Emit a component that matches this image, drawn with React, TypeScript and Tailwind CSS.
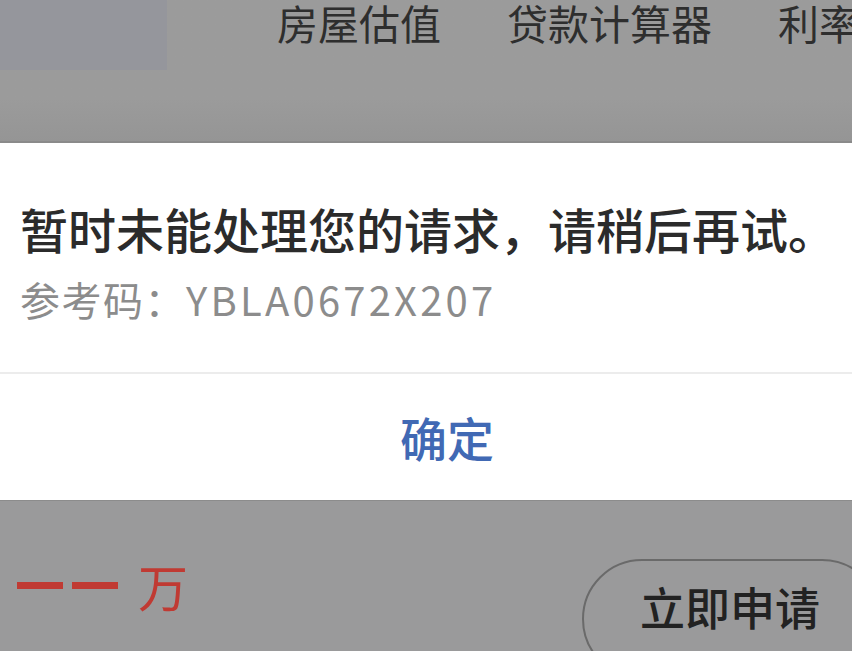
import React from "react";

export default function App() {
  return (
    <div
      className="w-[852px] h-[651px] overflow-hidden bg-[#9a9a9b] flex flex-col"
      style={{ fontFamily: '"Noto Sans CJK SC", "Noto Sans", sans-serif' }}
    >
      {/* top dimmed header */}
      <div className="h-[143px] flex items-start bg-gradient-to-b from-[#9b9b9b] from-70% to-[#959595] border-b-2 border-[#8a8a8a] shrink-0">
        <div className="w-[167px] h-[70px] bg-[#95969c] shrink-0" />
        <div className="ml-[110px] pt-[2px] flex gap-[66px] text-[41px] leading-[41px] text-[#2e2e2e] whitespace-nowrap">
          <span>房屋估值</span>
          <span>贷款计算器</span>
          <span>利率</span>
        </div>
      </div>

      {/* dialog */}
      <div className="bg-white h-[357px] shrink-0 flex flex-col">
        <div className="h-[231px] flex flex-col pl-[20px] pt-[57px] border-b-2 border-[#ececec]">
          <div className="text-[48px] leading-[56px] font-medium text-[#2b2b2b] whitespace-nowrap">
            暂时未能处理您的请求，请稍后再试。
          </div>
          <div className="mt-[20px] text-[40px] leading-[46px] tracking-[1.5px] text-[#8c8c8c] whitespace-nowrap">
            参考码：<span className="tracking-[3.2px]">YBLA0672X207</span>
          </div>
        </div>
        <div className="flex-1 flex items-center justify-center pl-[42px]">
          <span className="text-[47px] leading-[56px] font-medium text-[#4169b4]">确定</span>
        </div>
      </div>

      {/* bottom dimmed bar */}
      <div className="flex-1 relative border-t border-[#8c8c8c]">
        <div className="flex items-center pl-[17px] pt-[58px]">
          <span className="inline-block w-[46px] h-[7px] bg-[#c03a33]" />
          <span className="inline-block w-[46px] h-[7px] bg-[#c03a33] ml-[9px]" />
          <span className="ml-[20px] text-[50px] leading-[52px] text-[#c03a33]">万</span>
        </div>
        <div className="absolute left-[582px] top-[58px] w-[300px] h-[120px] rounded-full border-2 border-[#6a6a6a] flex items-start pl-[56px] pt-[18px]">
          <span className="text-[45px] leading-[56px] font-medium text-[#222] whitespace-nowrap">立即申请</span>
        </div>
      </div>
    </div>
  );
}
